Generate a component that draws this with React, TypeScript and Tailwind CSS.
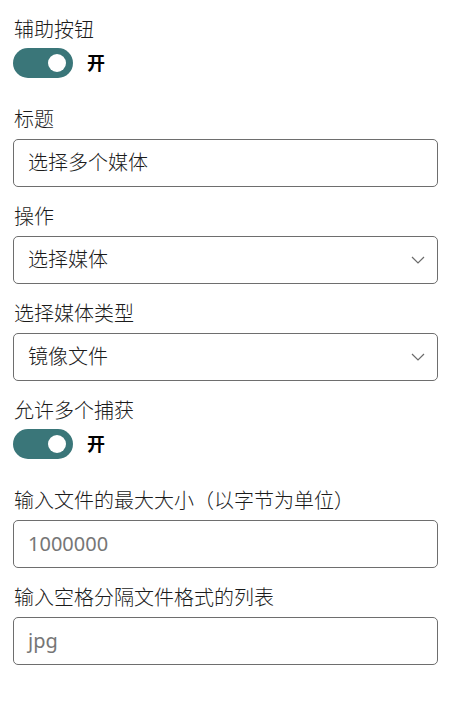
import React from "react";

const font = { fontFamily: '"Noto Sans", "Noto Sans CJK SC", sans-serif' };

function Toggle() {
  return (
    <div className="flex items-center h-[30px] mt-[4px]">
      <div className="w-[60px] h-[30px] rounded-full bg-[#3a7679] flex items-center justify-end pr-[7px]">
        <div className="w-[18px] h-[18px] rounded-full bg-white" />
      </div>
      <span className="ml-[14px] text-[18px] font-bold text-black leading-none">开</span>
    </div>
  );
}

function Label({ children }: { children: React.ReactNode }) {
  return <div className="text-[20px] leading-[28px] font-light text-[#1b1b1b] pl-[1px]">{children}</div>;
}

function Chevron() {
  return (
    <svg width="14" height="8" viewBox="0 0 14 8" className="mr-[12px]">
      <path d="M1 1 L7 7 L13 1" fill="none" stroke="#6b6b6b" strokeWidth="1.2" />
    </svg>
  );
}

function Box({ children, select }: { children: React.ReactNode; select?: boolean }) {
  return (
    <div className="mt-[5px] h-[48px] w-[425px] rounded-[5px] border border-[#6e6e6e] flex items-center justify-between pl-[14px]">
      <span className="text-[20px] leading-none">{children}</span>
      {select && <Chevron />}
    </div>
  );
}

export default function App() {
  return (
    <div className="w-[456px] h-[701px] bg-white pl-[13px] pt-[16px]" style={font}>
      <Label>辅助按钮</Label>
      <Toggle />
      <div className="mt-[28px]">
        <Label>标题</Label>
        <Box><span className="text-[#1b1b1b] font-light">选择多个媒体</span></Box>
      </div>
      <div className="mt-[16px]">
        <Label>操作</Label>
        <Box select><span className="text-[#1b1b1b] font-light">选择媒体</span></Box>
      </div>
      <div className="mt-[16px]">
        <Label>选择媒体类型</Label>
        <Box select><span className="text-[#1b1b1b] font-light">镜像文件</span></Box>
      </div>
      <div className="mt-[16px]">
        <Label>允许多个捕获</Label>
        <Toggle />
      </div>
      <div className="mt-[28px]">
        <Label>输入文件的最大大小（以字节为单位）</Label>
        <Box><span className="text-[#767676] font-normal text-[20px]">1000000</span></Box>
      </div>
      <div className="mt-[16px]">
        <Label>输入空格分隔文件格式的列表</Label>
        <Box><span className="text-[#767676] font-normal text-[20px]">jpg</span></Box>
      </div>
    </div>
  );
}
